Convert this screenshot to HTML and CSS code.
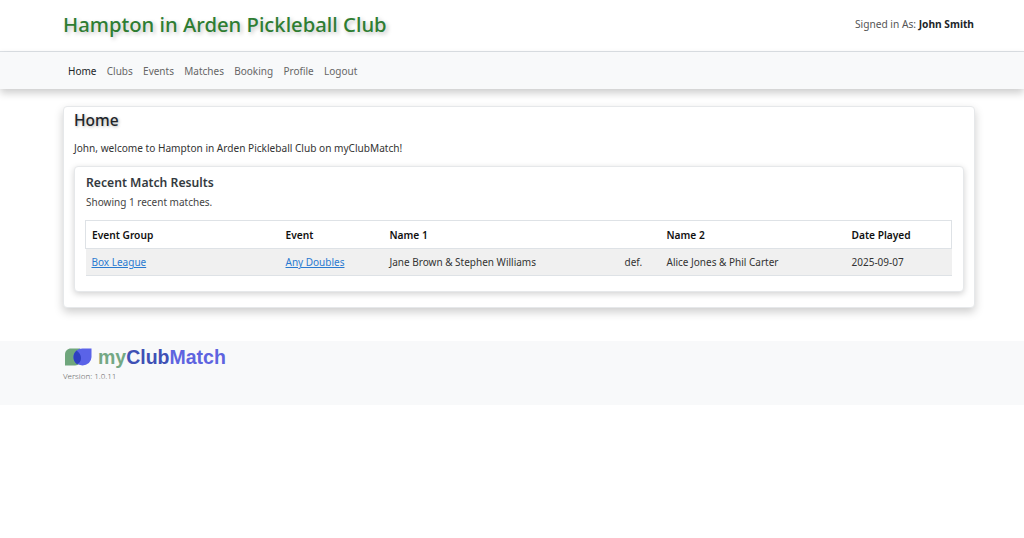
FILE: index.html
```html
<!DOCTYPE html>
<html lang="en">
<head>
    <meta charset="UTF-8">
    <meta name="viewport" content="width=device-width, initial-scale=1.0">
    <title>Hampton in Arden Pickleball Club</title>
    <link rel="stylesheet" href="styles.css">
</head>
<body>
    <header class="site-header">
        <div class="container header-row">
            <h1 class="club-name">Hampton in Arden Pickleball Club</h1>
            <p class="signed-in">Signed in As: <strong>John Smith</strong></p>
        </div>
    </header>

    <nav class="main-nav">
        <div class="container nav-links">
            <a class="active" href="#">Home</a>
            <a href="#">Clubs</a>
            <a href="#">Events</a>
            <a href="#">Matches</a>
            <a href="#">Booking</a>
            <a href="#">Profile</a>
            <a href="#">Logout</a>
        </div>
    </nav>

    <main class="container">
        <section class="card page-card">
            <h2 class="page-title">Home</h2>
            <p class="welcome">John, welcome to Hampton in Arden Pickleball Club on myClubMatch!</p>

            <section class="card results-card">
                <h3 class="results-title">Recent Match Results</h3>
                <p class="results-count">Showing 1 recent matches.</p>
                <table class="results">
                    <thead>
                        <tr>
                            <th class="col-group">Event Group</th>
                            <th class="col-event">Event</th>
                            <th class="col-name1">Name 1</th>
                            <th class="col-def"></th>
                            <th class="col-name2">Name 2</th>
                            <th>Date Played</th>
                        </tr>
                    </thead>
                    <tbody>
                        <tr>
                            <td><a href="#">Box League</a></td>
                            <td><a href="#">Any Doubles</a></td>
                            <td>Jane Brown &amp; Stephen Williams</td>
                            <td>def.</td>
                            <td>Alice Jones &amp; Phil Carter</td>
                            <td>2025-09-07</td>
                        </tr>
                    </tbody>
                </table>
            </section>
        </section>
    </main>

    <footer class="site-footer">
        <div class="container">
            <div class="brand">
                <svg class="brand-mark" width="29" height="20" viewBox="0 0 29 20" aria-hidden="true">
                    <path d="M8 1.500H17C18 5 18 8 18 11C18 15 16 18.500 12 18.500H2V7.500C2 4 4.500 1.500 8 1.500Z" fill="#6fa67c"/>
                    <path d="M19.500 1.500H28.500V10A9 8.500 0 1 1 19.500 1.500Z" fill="#5a63e8"/>
                    <path d="M13.500 3.500C16.500 6 18 8 18 11C18 14 16.500 16.500 14 17.200A9 8.500 0 0 1 10.500 10A9 8.500 0 0 1 13.500 3.500Z" fill="#2f3fc0"/>
                </svg>
                <span class="brand-name"><span class="brand-my">my</span><span class="brand-club">Club</span><span class="brand-match">Match</span></span>
            </div>
            <p class="version">Version: 1.0.11</p>
        </div>
    </footer>
</body>
</html>
```

FILE: styles.css
```css
* {
    box-sizing: border-box;
}
body {
    margin: 0;
    font-family: "Noto Sans", "Open Sans", sans-serif;
    font-size: 10px;
    color: #333;
    background-color: white;
}
.container {
    width: 912px;
    margin-left: 63px;
}
.site-header {
    height: 52px;
    border-bottom: 1px solid #dee2e6;
}
.header-row {
    height: 47px;
    display: flex;
    align-items: center;
    justify-content: space-between;
}
.club-name {
    margin: 0;
    font-size: 20.250px;
    font-weight: 500;
    color: #2e7d32;
    text-shadow: 2px 2px 4px rgba(0, 0, 0, 0.25);
}
.signed-in {
    margin: 0;
    padding-right: 1px;
    font-size: 10.200px;
    color: #555;
}
.signed-in strong {
    color: #212529;
}
.main-nav {
    height: 37px;
    background-color: #f8f9fa;
    box-shadow: 0 4px 8px rgba(0, 0, 0, 0.2);
}
.nav-links {
    height: 37px;
    display: flex;
    align-items: center;
    gap: 10.300px;
    padding-left: 5px;
}
.nav-links a {
    color: #666;
    text-decoration: none;
}
.nav-links a.active {
    color: #212529;
}
.card {
    background-color: white;
    border: 1px solid #e6e8ea;
    border-radius: 4px;
}
.page-card {
    margin-top: 17px;
    height: 202px;
    padding: 3px 10px 0;
    box-shadow: 0 4px 10px rgba(0, 0, 0, 0.2);
}
.page-title {
    margin: 0;
    font-size: 15.500px;
    font-weight: 500;
    line-height: 21px;
    color: #212529;
    text-shadow: 1px 1px 3px rgba(0, 0, 0, 0.3);
}
.welcome {
    margin: 10px 0 10px;
    font-size: 10.100px;
    line-height: 15px;
}
.results-card {
    height: 126px;
    padding: 7px 10px 0;
    box-shadow: 0 2px 6px rgba(0, 0, 0, 0.18);
}
.results-title {
    margin: 0 0 0 1px;
    font-size: 12.200px;
    font-weight: 600;
    line-height: 17px;
    color: #343a40;
}
.results-count {
    margin: 4px 0 10px 1px;
    line-height: 15px;
    color: #444;
}
.results {
    width: 867px;
    table-layout: fixed;
    border-collapse: collapse;
}
.results th,
.results td {
    padding: 0 7px 0 6px;
    text-align: left;
    border: 0;
}
.results th {
    height: 28px;
    font-size: 10.200px;
    color: #111;
    font-weight: 600;
}
.results thead tr {
    border: 1px solid #dee2e6;
}
.results td {
    height: 27px;
    background-color: #f0f0f0;
    border-bottom: 1px solid #dee2e6;
}
.results a {
    color: #2a7ad0;
}
.col-group {
    width: 194px;
}
.col-event {
    width: 104px;
}
.col-name1 {
    width: 235px;
}
.col-def {
    width: 42px;
}
.col-name2 {
    width: 185px;
}
.site-footer {
    margin-top: 33px;
    height: 64px;
    padding-top: 5px;
    background-color: #f8f9fa;
}
.brand {
    display: flex;
    align-items: center;
    gap: 6px;
    height: 22px;
}
.brand-name {
    font-family: "Liberation Sans", Arial, sans-serif;
    font-size: 19.500px;
    font-weight: 700;
}
.brand-my {
    color: #74a884;
}
.brand-club {
    color: #3f51b5;
}
.brand-match {
    color: #5e64e0;
}
.version {
    margin: 2px 0 0;
    font-size: 8px;
    font-weight: 300;
    color: #666;
}
```
